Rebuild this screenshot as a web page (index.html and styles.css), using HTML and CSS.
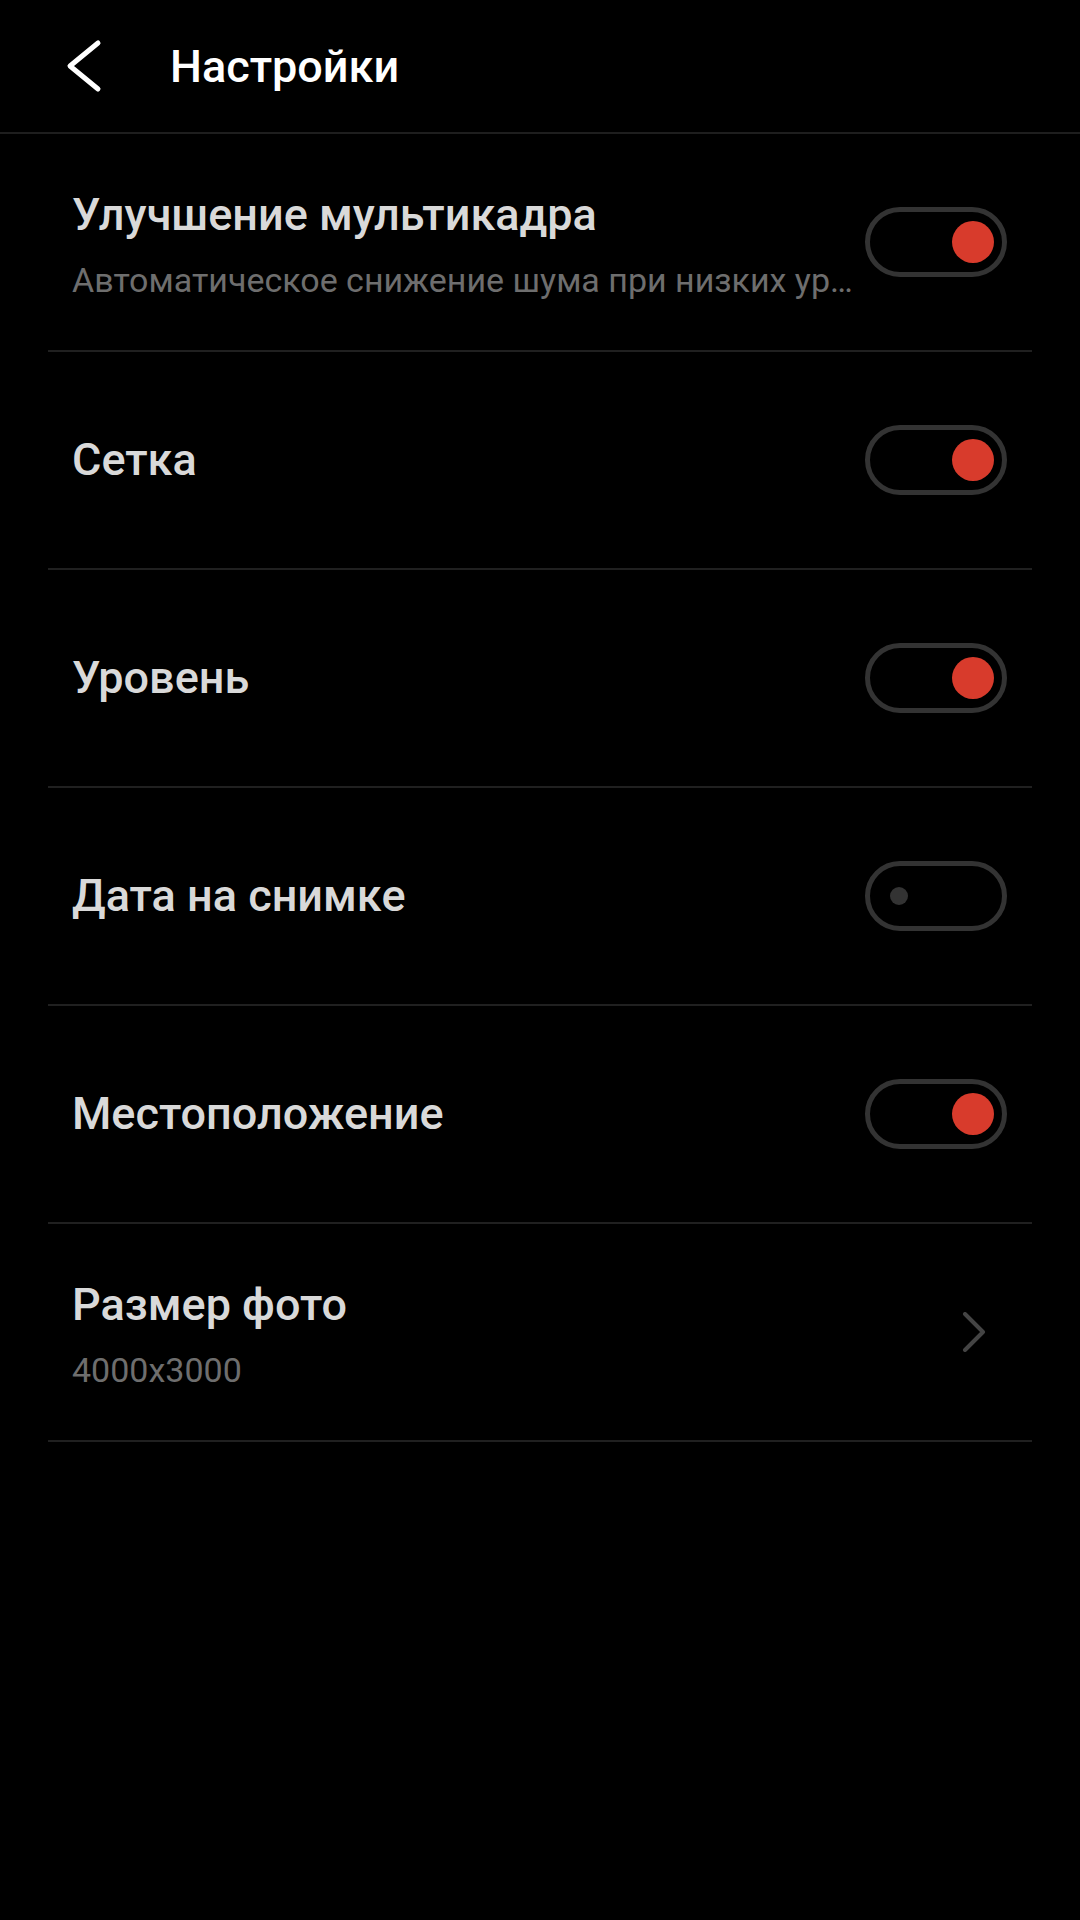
FILE: index.html
```html
<!DOCTYPE html>
<html lang="ru">
<head>
    <meta charset="UTF-8">
    <meta name="viewport" content="width=device-width, initial-scale=1.0">
    <title>Настройки</title>
    <link rel="stylesheet" href="styles.css">
</head>
<body>
    <header class="topbar">
        <svg class="back" width="40" height="60" viewBox="0 0 40 60">
            <path d="M34 7 L6 30 L34 53" fill="none" stroke="#fff" stroke-width="5" stroke-linecap="round" stroke-linejoin="round"/>
        </svg>
        <h1>Настройки</h1>
    </header>

    <div class="list">
        <div class="row">
            <div class="text two">
                <div class="title">Улучшение мультикадра</div>
                <div class="sub">Автоматическое снижение шума при низких уровнях освещённости</div>
            </div>
            <div class="switch on"><span class="knob"></span></div>
        </div>
        <div class="row">
            <div class="text"><div class="title">Сетка</div></div>
            <div class="switch on"><span class="knob"></span></div>
        </div>
        <div class="row">
            <div class="text"><div class="title">Уровень</div></div>
            <div class="switch on"><span class="knob"></span></div>
        </div>
        <div class="row">
            <div class="text"><div class="title">Дата на снимке</div></div>
            <div class="switch"><span class="knob"></span></div>
        </div>
        <div class="row">
            <div class="text"><div class="title">Местоположение</div></div>
            <div class="switch on"><span class="knob"></span></div>
        </div>
        <div class="row">
            <div class="text two">
                <div class="title">Размер фото</div>
                <div class="sub">4000x3000</div>
            </div>
            <svg class="chevron" width="24" height="40" viewBox="0 0 24 40">
                <path d="M3 2 L21 20 L3 38" fill="none" stroke="#444" stroke-width="4" stroke-linecap="round" stroke-linejoin="round"/>
            </svg>
        </div>
    </div>
</body>
</html>
```

FILE: styles.css
```css
body {
    margin: 0;
    background: #000;
    font-family: 'Roboto', 'Noto Sans', sans-serif;
    color: #d9d9d9;
    width: 1080px;
    height: 1920px;
}
.topbar {
    display: flex;
    align-items: center;
    height: 132px;
    border-bottom: 2px solid #1e1e1e;
}
.back {
    margin-left: 64px;
}
.topbar h1 {
    margin: 0 0 0 66px;
    font-size: 45px;
    font-weight: 500;
    color: #fff;
}
.list {
    margin: 0 48px;
}
.row {
    display: flex;
    align-items: center;
    height: 216px;
    padding: 0 25px 0 24px;
    border-bottom: 2px solid #202020;
}
.text {
    flex: 1;
    min-width: 0;
}
.text.two {
    padding-top: 3px;
}
.title {
    font-size: 45px;
    font-weight: 500;
    line-height: 56px;
    white-space: nowrap;
}
.sub {
    margin-top: 16px;
    font-size: 34px;
    line-height: 42px;
    color: #6e6e6e;
    white-space: nowrap;
    overflow: hidden;
    text-overflow: ellipsis;
}
.switch {
    flex: none;
    position: relative;
    width: 142px;
    height: 70px;
    margin-left: 10px;
    box-sizing: border-box;
    border: 5.5px solid #333;
    border-radius: 35px;
}
.knob {
    position: absolute;
    top: 50%;
    left: 20px;
    width: 18px;
    height: 18px;
    margin-top: -9px;
    border-radius: 50%;
    background: #333;
}
.switch.on .knob {
    left: auto;
    right: 8px;
    width: 42px;
    height: 42px;
    margin-top: -21px;
    background: #d83b2c;
}
.chevron {
    margin-right: 21px;
}
```
